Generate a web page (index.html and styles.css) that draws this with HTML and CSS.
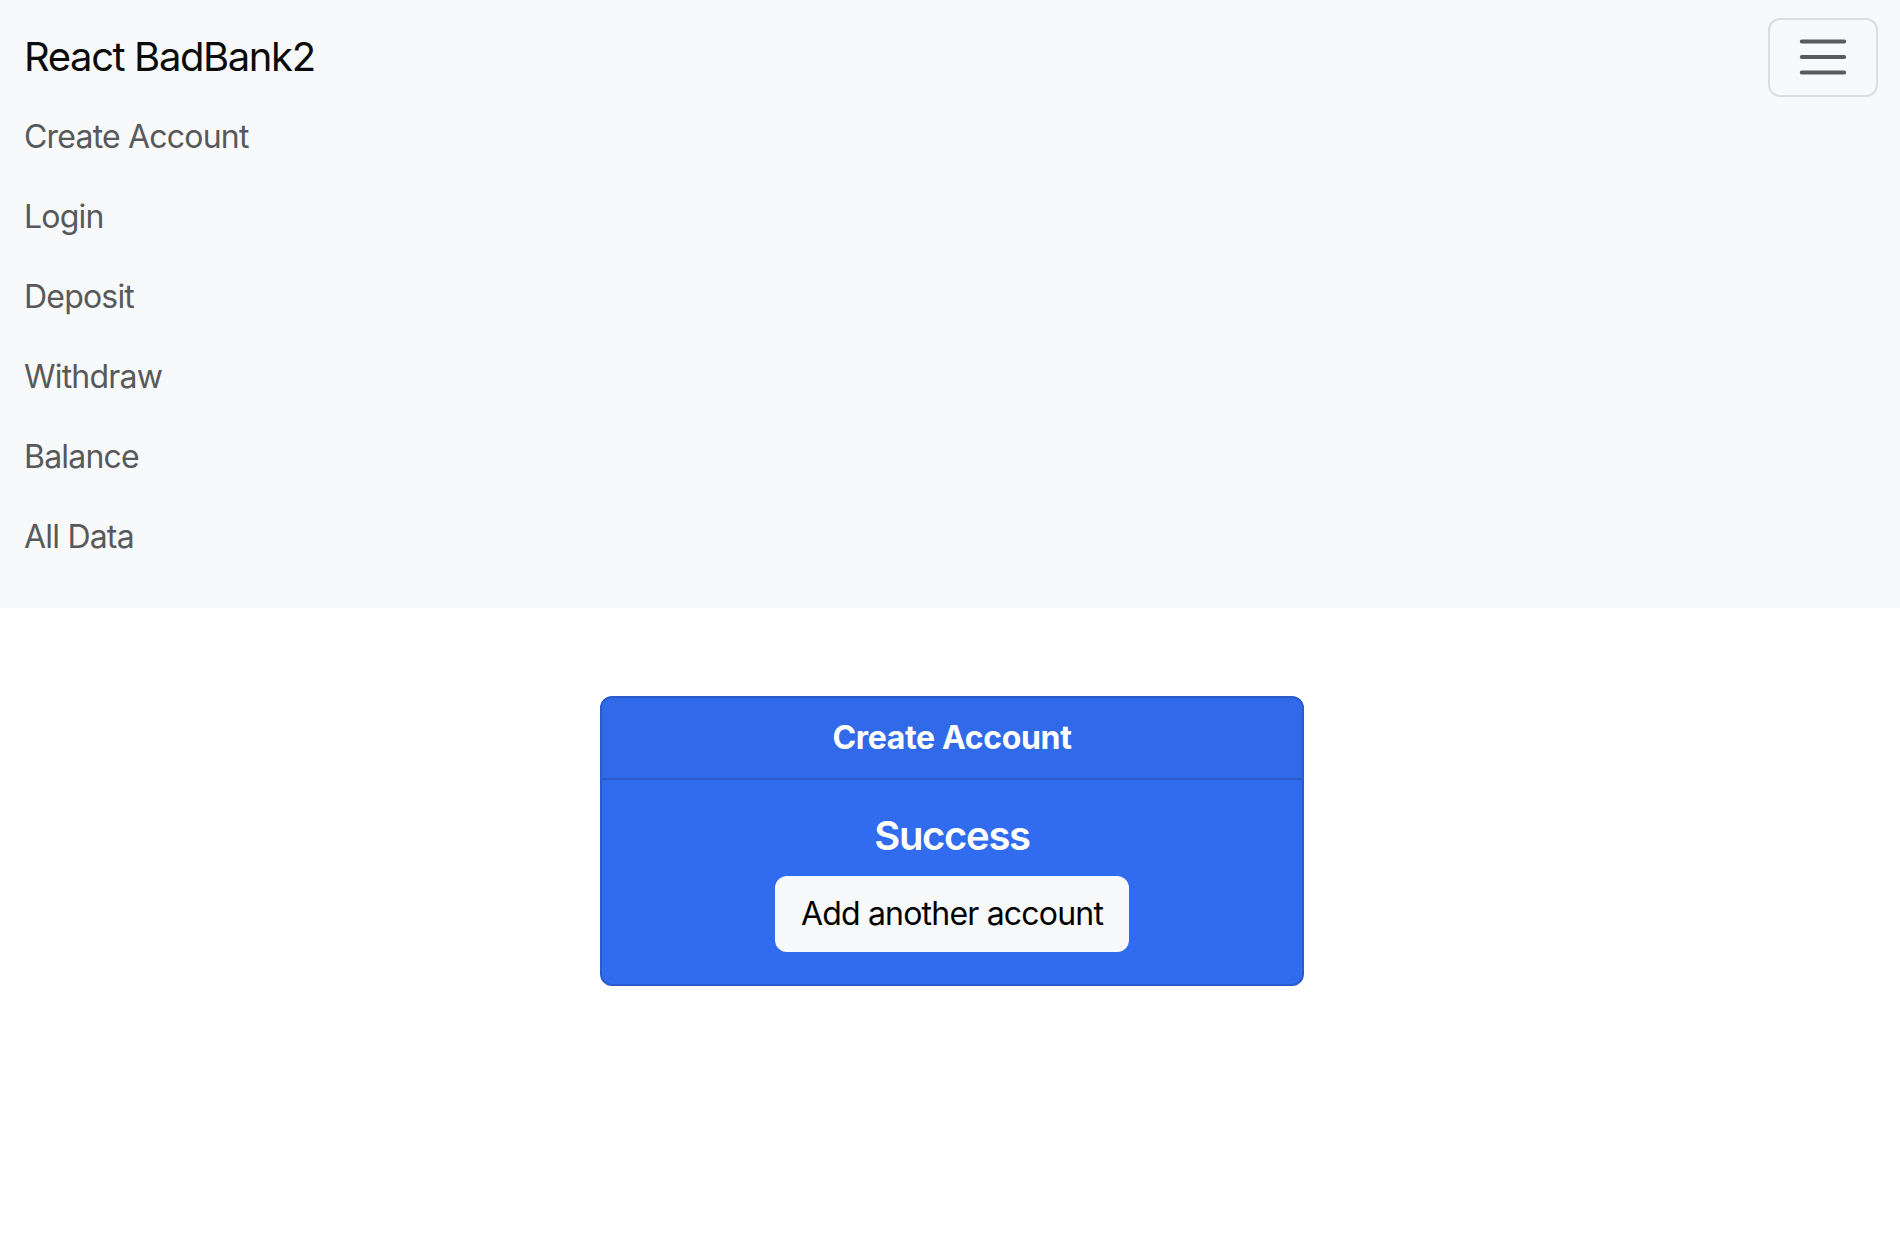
FILE: index.html
```html
<!DOCTYPE html>
<html lang="en">
<head>
<meta charset="utf-8">
<title>React BadBank2</title>
<link rel="stylesheet" href="styles.css">
</head>
<body>
<nav class="navbar">
  <div class="navbar-top">
    <a class="brand" href="#">React BadBank2</a>
    <button class="toggler" type="button" aria-label="Toggle navigation">
      <svg class="toggler-icon" viewBox="0 0 30 30" width="60" height="60">
        <path d="M4 7h22M4 15h22M4 23h22" stroke="#595c5f" stroke-width="2" stroke-linecap="round" fill="none"/>
      </svg>
    </button>
  </div>
  <ul class="nav-list">
    <li><a class="nav-link" href="#">Create Account</a></li>
    <li><a class="nav-link" href="#">Login</a></li>
    <li><a class="nav-link" href="#">Deposit</a></li>
    <li><a class="nav-link" href="#">Withdraw</a></li>
    <li><a class="nav-link" href="#">Balance</a></li>
    <li><a class="nav-link" href="#">All Data</a></li>
  </ul>
</nav>
<main class="content">
  <div class="card">
    <div class="card-header">Create Account</div>
    <div class="card-body">
      <h5 class="card-title">Success</h5>
      <button class="btn-light" type="button">Add another account</button>
    </div>
  </div>
</main>
</body>
</html>
```
FILE: styles.css
```css
* { box-sizing: border-box; }
html, body { margin: 0; padding: 0; }
body {
  font-family: Inter, "Noto Sans", "Liberation Sans", sans-serif;
  color: #212529;
  background: #fff;
  font-size: 32px;
  line-height: 48px;
}
.navbar {
  background: #f8f9fa;
  padding: 17px 22px 31px 24px;
}
.navbar-top {
  display: flex;
  justify-content: space-between;
  align-items: center;
}
.brand {
  display: block;
  font-size: 40px;
  line-height: 60px;
  padding: 10px 0;
  color: #0b0b0c;
  text-decoration: none;
  letter-spacing: -1.4px;
}
.toggler {
  width: 110px;
  height: 79px;
  padding: 8px 24px;
  border: 2px solid #dcdddf;
  border-radius: 12px;
  background: transparent;
  display: flex;
  align-items: center;
  justify-content: center;
}
.toggler-icon { display: block; }
.nav-list {
  list-style: none;
  margin: 0;
  padding: 0;
}
.nav-link {
  display: block;
  padding: 16px 0;
  font-size: 32px;
  line-height: 48px;
  color: #58595a;
  text-decoration: none;
  letter-spacing: -0.8px;
}
.content {
  display: flex;
  justify-content: center;
  padding-top: 88px;
}
.card {
  width: 704px;
  margin-left: 4px;
  background: #316cf0;
  border: 2px solid #2a5bcc;
  border-radius: 12px;
  overflow: hidden;
  color: #fff;
  text-align: center;
}
.card-header {
  padding: 16px 32px;
  font-size: 32px;
  line-height: 48px;
  font-weight: 700;
  background: #306ae9;
  border-bottom: 2px solid #2a5bcc;
  letter-spacing: -0.35px;
}
.card-body {
  padding: 32px;
  display: flex;
  flex-direction: column;
  align-items: center;
}
.card-title {
  margin: 0 0 16px 0;
  font-size: 40px;
  line-height: 48px;
  font-weight: 600;
  letter-spacing: -1.3px;
}
.btn-light {
  font-family: inherit;
  font-size: 32px;
  line-height: 48px;
  padding: 12px 24px;
  background: #f8f9fa;
  color: #000;
  border: 2px solid #f8f9fa;
  border-radius: 12px;
  letter-spacing: -0.8px;
}
```
